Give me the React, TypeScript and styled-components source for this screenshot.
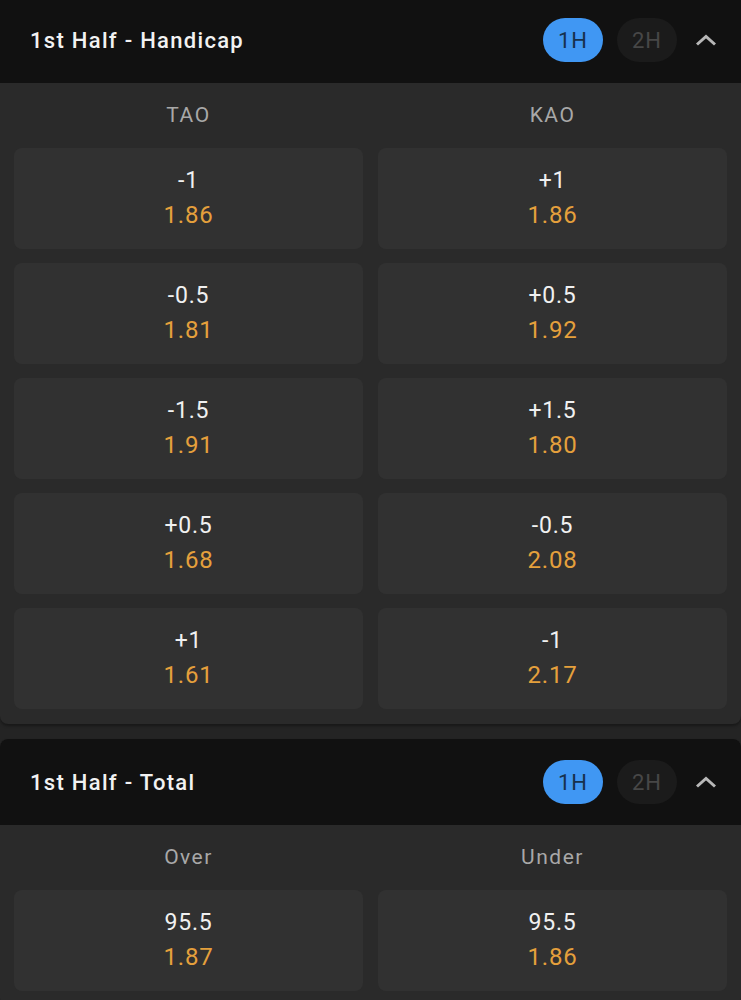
import React from "react";
import styled, { createGlobalStyle } from "styled-components";

const Global = createGlobalStyle`
  html, body { margin: 0; padding: 0; background: #242424; }
  body { font-family: Roboto, "Noto Sans", sans-serif; -webkit-font-smoothing: antialiased; }
`;

const Page = styled.div`
  width: 741px;
  height: 1000px;
  overflow: hidden;
  background: #242424;
  display: flex;
  flex-direction: column;
  gap: 15px;
`;

const Section = styled.section`
  flex-shrink: 0;
  background: #2a2a2a;
  border-radius: 8px;
  overflow: hidden;
  box-shadow: 0 2px 3px rgba(0, 0, 0, 0.35);
  &:first-child {
    margin-top: -3px;
    border-top-left-radius: 0;
    border-top-right-radius: 0;
  }
`;

const Header = styled.div`
  height: 86px;
  background: #111111;
  display: flex;
  align-items: center;
  padding: 0 22px 0 30px;
`;

const Title = styled.h2`
  margin: 0;
  flex: 1;
  font-size: 22px;
  font-weight: 500;
  color: #f2f2f2;
  letter-spacing: 1.3px;
`;

const Pill = styled.button<{ $active?: boolean }>`
  width: 60px;
  height: 44px;
  border: none;
  border-radius: 22px;
  margin-left: 14px;
  padding: 0;
  font-family: Roboto, sans-serif;
  font-size: 22px;
  letter-spacing: 1px;
  font-weight: 400;
  background: ${(p) => (p.$active ? "#4097f3" : "#1b1b1b")};
  color: ${(p) => (p.$active ? "#17314d" : "#474747")};
`;

const Chevron = styled.svg`
  margin-left: 16px;
  width: 26px;
  height: 26px;
`;

const Body = styled.div`
  padding: 0 14px 15px;
`;

const ColHeads = styled.div`
  height: 65px;
  display: grid;
  grid-template-columns: 1fr 1fr;
  column-gap: 15px;
  align-items: center;
`;

const ColHead = styled.div`
  text-align: center;
  font-size: 21px;
  letter-spacing: 1.5px;
  color: #a8a8a8;
  padding-bottom: 2px;
`;

const Grid = styled.div`
  display: grid;
  grid-template-columns: 1fr 1fr;
  column-gap: 15px;
  row-gap: 14px;
`;

const Cell = styled.div`
  height: 101px;
  background: #313131;
  border-radius: 8px;
  display: flex;
  flex-direction: column;
  align-items: center;
  justify-content: center;
  gap: 6px;
  padding-bottom: 2px;
  box-sizing: border-box;
`;

const Line = styled.div`
  font-size: 23px;
  letter-spacing: 0.8px;
  color: #f0f0f0;
  line-height: 29px;
`;

const Odds = styled.div`
  font-size: 24px;
  letter-spacing: 0.8px;
  color: #e5a03c;
  line-height: 29px;
`;

type Market = {
  title: string;
  cols: [string, string];
  rows: [string, string, string, string][];
};

const markets: Market[] = [
  {
    title: "1st Half - Handicap",
    cols: ["TAO", "KAO"],
    rows: [
      ["-1", "1.86", "+1", "1.86"],
      ["-0.5", "1.81", "+0.5", "1.92"],
      ["-1.5", "1.91", "+1.5", "1.80"],
      ["+0.5", "1.68", "-0.5", "2.08"],
      ["+1", "1.61", "-1", "2.17"],
    ],
  },
  {
    title: "1st Half - Total",
    cols: ["Over", "Under"],
    rows: [["95.5", "1.87", "95.5", "1.86"]],
  },
];

export default function App() {
  return (
    <>
      <Global />
      <Page>
        {markets.map((m) => (
          <Section key={m.title}>
            <Header>
              <Title>{m.title}</Title>
              <Pill $active>1H</Pill>
              <Pill>2H</Pill>
              <Chevron viewBox="0 0 26 26">
                <path d="M4 17.5 L13 9.5 L22 17.5" fill="none" stroke="#b8b8b8" strokeWidth="3" />
              </Chevron>
            </Header>
            <Body>
              <ColHeads>
                <ColHead>{m.cols[0]}</ColHead>
                <ColHead>{m.cols[1]}</ColHead>
              </ColHeads>
              <Grid>
                {m.rows.map((r, i) => (
                  <React.Fragment key={i}>
                    <Cell>
                      <Line>{r[0]}</Line>
                      <Odds>{r[1]}</Odds>
                    </Cell>
                    <Cell>
                      <Line>{r[2]}</Line>
                      <Odds>{r[3]}</Odds>
                    </Cell>
                  </React.Fragment>
                ))}
              </Grid>
            </Body>
          </Section>
        ))}
      </Page>
    </>
  );
}
